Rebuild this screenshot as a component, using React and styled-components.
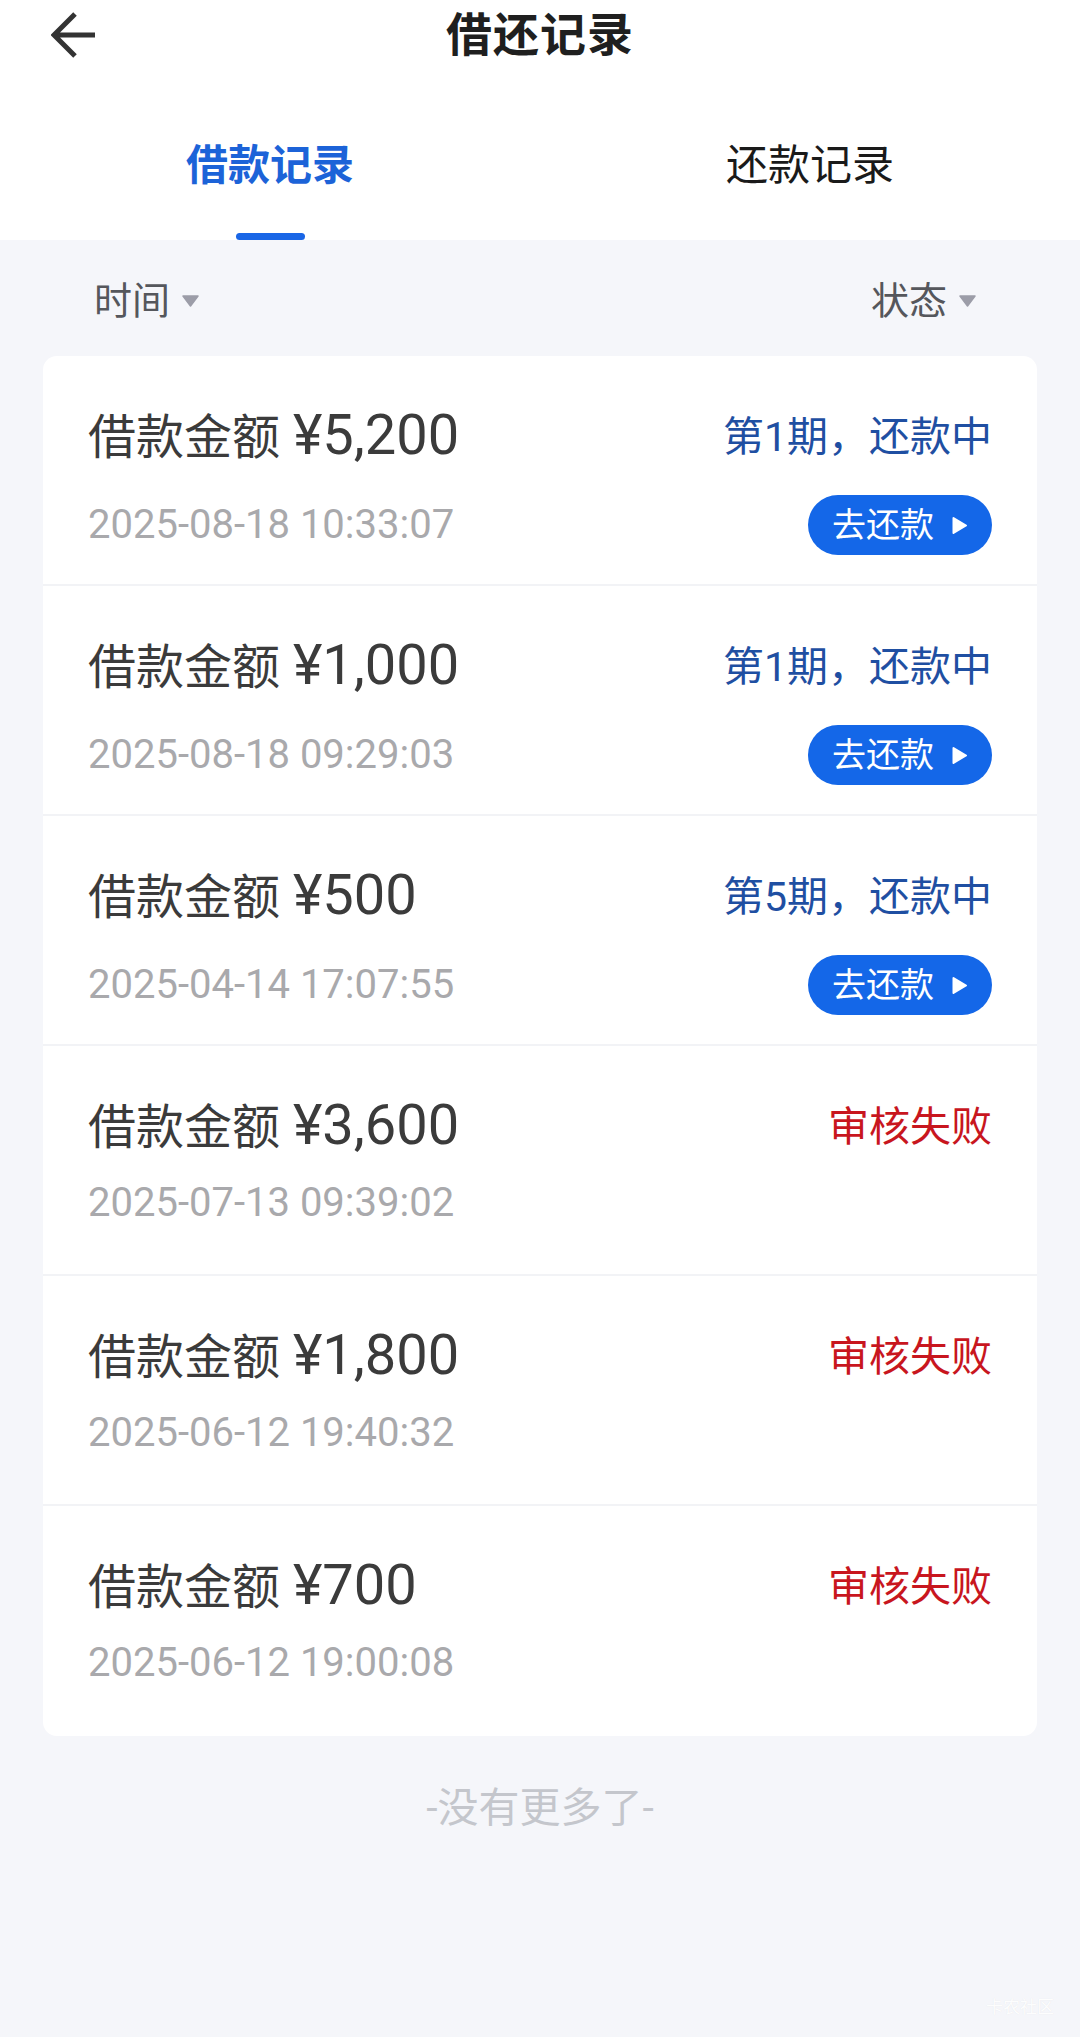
import React from 'react';
import styled, { createGlobalStyle } from 'styled-components';

const GlobalStyle = createGlobalStyle`
  html, body {
    margin: 0;
    padding: 0;
    background: #f5f6fa;
  }
  body {
    font-family: Roboto, "Noto Sans CJK SC", "Noto Sans", sans-serif;
    -webkit-font-smoothing: antialiased;
  }
  * { box-sizing: border-box; }
`;

const Page = styled.div`
  position: relative;
  min-height: 2037px;
  background: #f5f6fa;
`;

const Header = styled.header`
  background: #ffffff;
`;

const NavBar = styled.div`
  display: grid;
  grid-template-columns: 1fr auto 1fr;
  align-items: center;
  height: 70px;
  padding: 0 51px;
`;

const BackButton = styled.button`
  justify-self: start;
  display: flex;
  align-items: center;
  justify-content: center;
  width: 46px;
  height: 48px;
  padding: 0;
  border: none;
  background: none;
  cursor: pointer;
`;

const Title = styled.h1`
  margin: 0;
  font-size: 46px;
  line-height: 70px;
  font-weight: 700;
  color: #1f1f1f;
  letter-spacing: 1px;
`;

const Tabs = styled.nav`
  display: flex;
  height: 170px;
`;

const Tab = styled.div`
  flex: 1;
  display: flex;
  flex-direction: column;
  align-items: center;
  padding-top: 68px;
  cursor: pointer;
`;

const TabLabel = styled.span`
  font-size: 42px;
  line-height: 56px;
  font-weight: ${(p) => (p.$active ? 700 : 400)};
  color: ${(p) => (p.$active ? '#1c63d8' : '#1a1a1a')};
`;

const TabIndicator = styled.span`
  margin-top: auto;
  width: 69px;
  height: 7px;
  border-radius: 4px;
  background: ${(p) => (p.$active ? '#1a66e6' : 'transparent')};
`;

const FilterBar = styled.div`
  display: flex;
  justify-content: space-between;
  align-items: center;
  height: 116px;
  padding: 6px 104px 0 94px;
`;

const Filter = styled.div`
  display: flex;
  align-items: center;
  gap: 12px;
  font-size: 38px;
  line-height: 50px;
  color: #55575c;
`;

const Card = styled.section`
  margin: 0 43px;
  background: #ffffff;
  border-radius: 14px;
  overflow: hidden;
`;

const Row = styled.div`
  display: grid;
  grid-template-columns: 1fr auto;
  grid-template-rows: 55px auto;
  row-gap: 30px;
  align-items: center;
  align-content: start;
  height: 230px;
  padding: 54px 45px 0 45px;
  border-bottom: 2px solid #f2f3f6;

  &:last-child {
    border-bottom: none;
  }
`;

const Amount = styled.div`
  font-size: 48px;
  line-height: 55px;
  color: #3b3b3b;
  white-space: nowrap;
`;

const AmountValue = styled.span`
  font-size: 56px;
  line-height: 40px;
  margin-left: 1px;
`;

const Status = styled.div`
  justify-self: end;
  font-size: 41px;
  line-height: 55px;
  color: ${(p) => (p.$failed ? '#c8161e' : '#1f4fa2')};
`;

const DateText = styled.div`
  font-size: 40px;
  line-height: 36px;
  color: #a9a9ac;
`;

const PayButton = styled.button`
  justify-self: end;
  display: flex;
  align-items: center;
  gap: 17px;
  height: 60px;
  width: 184px;
  padding: 0 0 0 24px;
  border: none;
  border-radius: 30px;
  background: #1467e8;
  color: #ffffff;
  font-family: inherit;
  font-size: 34px;
  line-height: 60px;
  cursor: pointer;
`;

const Footer = styled.div`
  padding-top: 48px;
  text-align: center;
  font-size: 41px;
  line-height: 48px;
  color: #c4c6cc;
`;

const Watermark = styled.div`
  position: absolute;
  right: 26px;
  bottom: 20px;
  font-size: 17px;
  line-height: 20px;
  color: rgba(255, 255, 255, 0.95);
  text-shadow: 0 0 1px rgba(0, 0, 0, 0.08);
`;

const BackIcon = () => (
  <svg width="46" height="48" viewBox="0 0 46 48" fill="none">
    <path d="M24 3 L3 24 L24 45 M3 24 H44" stroke="#333333" strokeWidth="5" strokeLinejoin="miter" />
  </svg>
);

const Caret = () => (
  <svg width="17" height="12" viewBox="0 0 17 12">
    <path d="M1 1 H16 L8.5 11 Z" fill="#9c9da8" stroke="#9c9da8" strokeWidth="1.5" strokeLinejoin="round" />
  </svg>
);

const PlayIcon = () => (
  <svg width="17" height="19" viewBox="0 0 17 19">
    <path d="M2.5 2 L15 9.5 L2.5 17 Z" fill="#ffffff" stroke="#ffffff" strokeWidth="2" strokeLinejoin="round" />
  </svg>
);

const records = [
  { amount: '¥5,200', date: '2025-08-18 10:33:07', status: '第1期，还款中', failed: false },
  { amount: '¥1,000', date: '2025-08-18 09:29:03', status: '第1期，还款中', failed: false },
  { amount: '¥500', date: '2025-04-14 17:07:55', status: '第5期，还款中', failed: false },
  { amount: '¥3,600', date: '2025-07-13 09:39:02', status: '审核失败', failed: true },
  { amount: '¥1,800', date: '2025-06-12 19:40:32', status: '审核失败', failed: true },
  { amount: '¥700', date: '2025-06-12 19:00:08', status: '审核失败', failed: true },
];

export default function App() {
  return (
    <Page>
      <GlobalStyle />
      <Header>
        <NavBar>
          <BackButton aria-label="返回">
            <BackIcon />
          </BackButton>
          <Title>借还记录</Title>
          <span />
        </NavBar>
        <Tabs>
          <Tab>
            <TabLabel $active>借款记录</TabLabel>
            <TabIndicator $active />
          </Tab>
          <Tab>
            <TabLabel>还款记录</TabLabel>
            <TabIndicator />
          </Tab>
        </Tabs>
      </Header>
      <FilterBar>
        <Filter>
          时间
          <Caret />
        </Filter>
        <Filter>
          状态
          <Caret />
        </Filter>
      </FilterBar>
      <Card>
        {records.map((r, i) => (
          <Row key={i}>
            <Amount>
              借款金额 <AmountValue>{r.amount}</AmountValue>
            </Amount>
            <Status $failed={r.failed}>{r.status}</Status>
            <DateText>{r.date}</DateText>
            {!r.failed && (
              <PayButton>
                去还款
                <PlayIcon />
              </PayButton>
            )}
          </Row>
        ))}
      </Card>
      <Footer>-没有更多了-</Footer>
      <Watermark>卡农社区</Watermark>
    </Page>
  );
}
